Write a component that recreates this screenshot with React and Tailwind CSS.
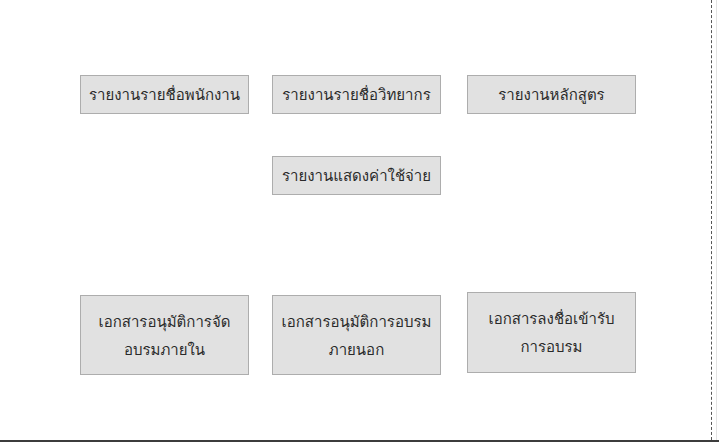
const rows = [
  { top: 'pt-[75px]', items: ['รายงานรายชื่อพนักงาน', 'รายงานรายชื่อวิทยากร', 'รายงานหลักสูตร'] },
];

function Btn({ children, className = '' }) {
  return (
    <button
      type="button"
      className={`flex w-[169px] shrink-0 items-center justify-center whitespace-nowrap border border-[#adadad] bg-[#e1e1e1] text-center text-[15px] leading-[28px] text-[#2a2a2a] ${className}`}
    >
      {children}
    </button>
  );
}

export default function App() {
  return (
    <div
      className="flex h-[442px] w-[719px] flex-col overflow-hidden bg-white"
      style={{ fontFamily: 'Tahoma, Loma, Garuda, "Noto Sans Thai Looped", "Noto Sans Thai", "DejaVu Sans", sans-serif' }}
    >
      <div className="flex flex-1">
        <div className="flex w-[712px] flex-col border-r border-dashed border-[#555]">
          {rows.map((row, i) => (
            <div key={i} className={`flex ${row.top} pl-[80px]`}>
              <Btn className="h-[39px] pt-[1px]">{row.items[0]}</Btn>
              <Btn className="ml-[23px] h-[39px] pt-[1px]">{row.items[1]}</Btn>
              <Btn className="ml-[26px] h-[39px] pt-[1px]">{row.items[2]}</Btn>
            </div>
          ))}
          <div className="flex pl-[272px] pt-[42px]">
            <Btn className="h-[39px] pt-[1px]">รายงานแสดงค่าใช้จ่าย</Btn>
          </div>
          <div className="flex items-start pl-[80px] pt-[97px]">
            <Btn className="mt-[3px] h-[80px] pt-[2px]">
              เอกสารอนุมัติการจัด
              <br />
              อบรมภายใน
            </Btn>
            <Btn className="ml-[23px] mt-[3px] h-[80px] pt-[2px]">
              เอกสารอนุมัติการอบรม
              <br />
              ภายนอก
            </Btn>
            <Btn className="ml-[26px] h-[81px]">
              เอกสารลงชื่อเข้ารับ
              <br />
              การอบรม
            </Btn>
          </div>
        </div>
        <div className="ml-[4px] w-[1px] bg-[#e3e3e3]" />
      </div>
      <div className="h-[2px] bg-[#3c3c3c]" />
    </div>
  );
}
